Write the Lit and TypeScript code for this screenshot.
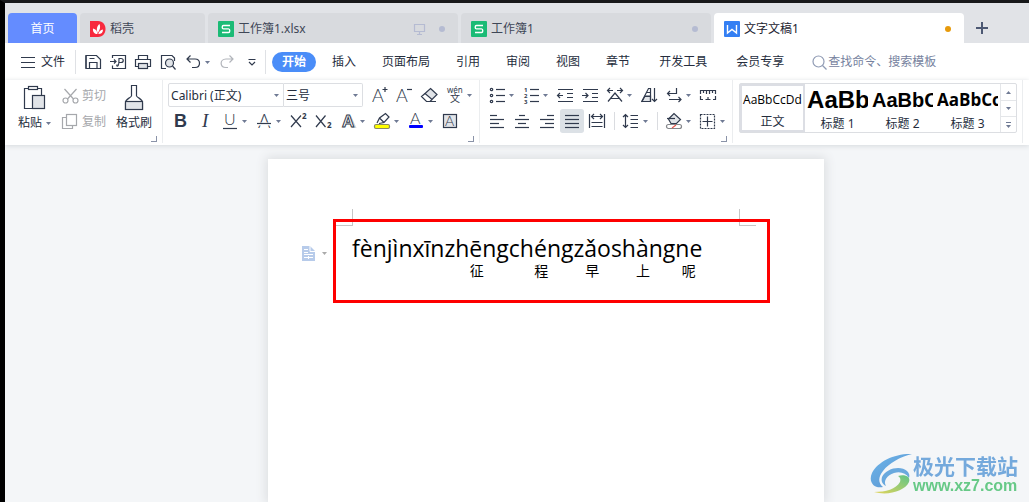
import { LitElement, html, svg, css } from "lit";
import { customElement } from "lit/decorators.js";
import { classMap } from "lit/directives/class-map.js";

const icon = (body: unknown, w = 20, h = 20) => html`<svg
  class="ic" width=${w} height=${h} viewBox="0 0 ${w} ${h}" aria-hidden="true">${body}</svg>`;

const p = (d: string) => svg`<path d=${d} />`;

const caretShape = html`<svg class="caret-shape" width="5" height="3" viewBox="0 0 5 3" aria-hidden="true"><path d="M0 0H5L2.5 3Z" /></svg>`;

interface Tool {
  name: string;
  body?: unknown;
  caret?: boolean;
  active?: boolean;
  rule?: boolean;
}

const hline = (y: number, a: number, b: number) => `M${a} ${y}H${b}`;

const quickTools: Tool[] = [
  { name: "保存", body: svg`${p("M3 3.5H13.5L17.5 7.5V16.5H3Z")}${p("M3 3.5V16.5M6.5 16.5V10.5H14V16.5M6.5 6.5H11.5")}` },
  { name: "输出为PDF", body: svg`${p("M4.5 6V3.5H17.5V16.5H4.5V13.5")}${p("M2 9.5H8M6 7.5L8 9.5L6 11.5")}${p("M9.5 12.5C8.5 13 8.5 14.5 9.8 14C11 13.5 11 9 11 6.5H13C16 6.5 16 10.5 13 10.5H11")}` },
  { name: "打印", body: svg`${p("M5.5 7.5V3.5H14.5V7.5M5.5 14.5H2.5V7.5H17.5V14.5H14.5")}<rect class="soft" x="5.5" y="11.5" width="9" height="5" />` },
  { name: "打印预览", body: svg`${p("M8 16.5H3.5V3.5H14L16.5 6V9")}<circle class="soft" cx="11.5" cy="11" r="4" />${p("M14.5 14L17.5 17.5")}` },
  { name: "撤销", caret: true, body: p("M7.5 3.5L4 7L7.5 10.5M4 7H12C18 7 18 15.5 12 15.5H9") },
  { name: "恢复", body: svg`<g class="dim">${p("M12.500 3.500L16 7L12.500 10.500M16 7H9C2.500 7 2.500 15.500 9 15.500H11")}</g>` },
  { name: "更多", body: svg`${p("M6.500 7.500H13.500M7 10L10 13L13 10")}` },
];

const glyph = (t: string, x: number, y: number, size: number, cls = "thin") =>
  svg`<text class=${cls} x=${x} y=${y} font-size=${size}>${t}</text>`;

const fontTop: Tool[] = [
  { name: "增大字号", body: svg`${glyph("A", 2, 17, 18)}${p("M12.500 4.500H17.500M15 2V7")}` },
  { name: "减小字号", body: svg`${glyph("A", 1, 17, 18)}${p("M12 4.500H17")}` },
  { name: "清除格式", body: svg`<path class="soft" d="M10.500 3.500L17 9.500L12 14.500L5 8.500Z" />${p("M5 8.500L1.500 11.500L6.500 16.500H10L12 14.500M8 16.500H16")}` },
  { name: "拼音指南", caret: true, body: svg`${glyph("wén", 2, 8, 8, "tiny")}${glyph("文", 5, 17, 10, "tiny")}` },
];

const fontBottom: Tool[] = [
  { name: "加粗", body: glyph("B", 4, 16, 18, "heavy") },
  { name: "倾斜", body: glyph("I", 7, 16, 19, "slant") },
  { name: "下划线", caret: true, body: svg`${glyph("U", 4, 14, 16)}${p(hline(17.5, 3, 17))}` },
  { name: "删除线", caret: true, body: svg`${glyph("A", 4, 17, 19)}<path class="knock" d="M3 13H17" />${p(hline(12.5, 3, 17))}` },
  { name: "上标", body: svg`${p("M3 4.500L13 16M13 4.500L3 16")}${glyph("2", 14, 8, 8, "tiny strong")}` },
  { name: "下标", body: svg`${p("M3 4.500L12.500 16M12.500 4.500L3 16")}${glyph("2", 14, 17, 8, "tiny strong")}` },
  { name: "文字效果", caret: true, body: svg`<path class="ghost" d="M12 5L17 16H14" /><text class="outline" x="4" y="16" font-size="17">A</text>` },
  { name: "突出显示", caret: true, body: svg`${p("M5 12L7.500 7L13.500 2.500L17 6L12 11.500L7 12.500M7.500 7L12 11.500")}<rect class="marker" x="2.500" y="13.500" width="15" height="4" rx="1.500" />` },
  { name: "字体颜色", caret: true, body: svg`${glyph("A", 4, 13, 16)}<rect class="blue" x="3" y="14" width="14" height="3" rx="1" />` },
  { name: "字符底纹", body: svg`<rect class="soft" x="3.500" y="3.500" width="13" height="13" />${glyph("A", 5, 15, 14)}` },
];

const arrowL = (x: number, y: number) => `M${x + 2.5} ${y - 2.5}L${x} ${y}L${x + 2.5} ${y + 2.5}`;
const arrowR = (x: number, y: number) => `M${x - 2.5} ${y - 2.5}L${x} ${y}L${x - 2.5} ${y + 2.5}`;

const paraTop: Tool[] = [
  { name: "项目符号", caret: true, body: svg`${[4.5, 10.5, 16.5].map((y) => svg`<circle cx="4.500" cy=${y} r="1.200" />${p(hline(y, 9, 18))}`)}` },
  { name: "编号", caret: true, body: svg`${[4.5, 10.5, 16.5].map((y, i) => svg`${glyph(String(i + 1), 3, y + 2, 6, "tiny strong")}${p(hline(y, 9, 18))}`)}` },
  { name: "减少缩进量", body: svg`${p("M3 4.500H18M12 8.500H18M12 12.500H18M3 16.500H18M3 10.500H8")}${p(arrowL(2.5, 10.5))}` },
  { name: "增加缩进量", body: svg`${p("M3 4.500H18M12 8.500H18M12 12.500H18M3 16.500H18M2 10.500H8")}${p(arrowR(8, 10.5))}` },
  { name: "中文版式", caret: true, body: svg`${p("M2.500 5.500H8M12 5.500H17.500M3 16.500L10 8L17 16.500M6 13.500H14")}${p(arrowL(2.5, 5.5))}${p(arrowR(17.5, 5.5))}` },
  { name: "排序", body: svg`<path class="soft" d="M6 11H11.500V16.500H3Z" />${p("M2.500 17L9.500 3.500H11.500V17M7.500 7.500H11.500M5.500 11.500H11.500M3 16.500H11.500M15.500 3V16.500M13 14L15.500 16.500L18 14")}` },
  { name: "换行", caret: true, body: svg`${p("M12.500 3V8.500H4M5 14.500H16.500")}${p(arrowL(3.5, 8.5))}${p(arrowR(17, 14.5))}` },
  { name: "标尺", body: svg`${p("M2.500 9V5.500H17.500V9M5.500 5.500V8M8.500 5.500V9M11.500 5.500V9M14.500 5.500V8M2.500 11V14.500H5M17.500 11V14.500H15M7.500 14.500H12.500M10 12V14.500")}` },
];

const bars = (spans: [number, number][]) => svg`${spans.map(([a, b], i) => p(hline(4.5 + i * 4, a, b)))}`;

const paraBottom: Tool[] = [
  { name: "左对齐", body: bars([[3, 10], [3, 17], [3, 12], [3, 17]]) },
  { name: "居中对齐", body: bars([[7, 13], [3, 17], [6, 14], [3, 17]]) },
  { name: "右对齐", body: bars([[10, 17], [3, 17], [8, 17], [3, 17]]) },
  { name: "两端对齐", active: true, body: bars([[3, 17], [3, 17], [3, 17], [3, 17]]) },
  { name: "分散对齐", body: svg`${p("M2.500 3V17M17.500 3V17M4 5.500H16M4.500 11.500H15.500M4.500 15.500H15.500")}${p(arrowL(4.5, 5.5))}${p(arrowR(15.5, 5.5))}` },
  { name: "", rule: true },
  { name: "行距", caret: true, body: svg`${p("M4.500 3.500V16.500M2 6L4.500 3.500L7 6M2 14L4.500 16.500L7 14M9.500 4.500H17M9.500 8.500H17M9.500 12.500H17M9.500 16.500H17")}` },
  { name: "", rule: true },
  { name: "底纹颜色", caret: true, body: svg`<path class="soft" d="M4.500 8L10 2.500L16.500 8.500L12.500 12.500H7Z" />${p("M3 7.500H11")}<rect class="nofill" x="2.500" y="13.500" width="15" height="4" rx="2" /><path class="red" d="M8 17L12 14" />` },
  { name: "边框", caret: true, body: svg`<rect class="dash" x="2.500" y="3.500" width="14" height="14" />${p("M9.500 5.500V15.500M4.500 10.500H14.500")}` },
];

const sheetLogo = icon(svg`<rect class="sheet" width="16" height="16" rx="1" /><path class="logo-line" d="M12 4.500H5.500C3.800 4.500 3.800 7.900 5.500 7.900H10.500C12.200 7.900 12.200 11.500 10.500 11.500H4" />`, 16, 16);
const writerLogo = icon(svg`<rect class="writer" width="16" height="16" rx="1" /><path class="logo-line" d="M3.500 4V12L8 8.500L12.500 12V4" />`, 16, 16);
const docerLogo = icon(svg`<path class="docer" d="M0 0H8C18 0 18 16 8 16H0Z" /><path class="leaf" d="M7.500 13C4.500 13 2.500 11 3 7.500C6 8 7.200 10 7.500 13ZM7.800 12C6 8.500 7 5 9.500 3C10.800 6 10 9 7.800 12ZM8.300 13C9 10.500 10.500 9 13 8.500C13 11.500 11.500 13 8.300 13Z" />`, 16, 16);

const tabs = [
  { label: "稻壳", logo: docerLogo, cls: "docer-tab" },
  { label: "工作簿1.xlsx", logo: sheetLogo, cls: "file", screen: true, dot: true },
  { label: "工作簿1", logo: sheetLogo, cls: "file", dot: true },
  { label: "文字文稿1", logo: writerLogo, cls: "file current", dot: true },
];

const syllables: [string, string][] = [
  ["fèn", ""], ["jìn", ""], ["xīn", ""], ["zhēng", "征"], ["chéng", "程"], ["zǎo", "早"], ["shàng", "上"], ["ne", "呢"],
];

const styleCards = [
  { sample: "AaBbCcDd", label: "正文", cls: "body-style" },
  { sample: "AaBb", label: "标题 1", cls: "h1-style" },
  { sample: "AaBbC", label: "标题 2", cls: "h2-style" },
  { sample: "AaBbCc", label: "标题 3", cls: "h3-style" },
];

@customElement("app-root")
export class AppRoot extends LitElement {
  static styles = css`
    :host {
      display: block;
      font: 12px/16px "Noto Sans", "Noto Sans CJK SC", sans-serif;
      color: #252d3d;
    }
    * { box-sizing: border-box; }
    button, select, input { font: inherit; color: inherit; border: 0; background: none; padding: 0; margin: 0; }
    button { display: flex; align-items: center; justify-content: center; white-space: nowrap; cursor: pointer; }
    .app {
      display: flex; flex-direction: column; min-height: 100vh;
      border-top: 3px solid #17181a; border-left: 5px solid #000;
      background: #f4f6f8; overflow: hidden;
    }
    .ic { display: block; flex: none; fill: none; stroke: #303a4d; stroke-width: 1.2; overflow: visible; }
    .ic text { stroke: none; fill: #303a4d; }
    .soft { fill: #e1e4e8; }
    .dim { stroke: #b2b5bb; }
    .thin { font-family: Lato, sans-serif; font-weight: 300; }
    .tiny { font-family: "Noto Sans", "Noto Sans CJK SC", sans-serif; }
    .strong { font-weight: 700; }
    .heavy { font-family: "Liberation Sans", sans-serif; font-weight: 700; }
    .slant { font-family: "Liberation Serif", serif; font-style: italic; }
    .ic .outline { font-family: "Liberation Sans", sans-serif; font-weight: 700; fill: #fff; stroke: #303a4d; stroke-width: 1; }
    .ghost { stroke: #d5d7da; stroke-width: 2; }
    .knock { stroke: #fff; stroke-width: 3; }
    .marker { fill: #ff0; stroke: #8b8b64; }
    .blue { fill: #00f; stroke: none; }
    .nofill { fill: #fff; stroke: #85878b; }
    .red { stroke: #e8564c; }
    .dash { stroke-dasharray: 2 1; }
    .sheet { fill: #1bbb76; stroke: none; }
    .writer { fill: #347ff3; stroke: none; }
    .docer { fill: #f8293d; stroke: none; }
    .leaf { fill: #fff; stroke: none; }
    .logo-line { stroke: #fff; stroke-width: 1.400; }
    .caret-shape { display: block; fill: #6f7a94; }

    .tabs { display: flex; align-items: flex-end; gap: 3px; height: 40px; padding-left: 3px; background: #e1e3e7; }
    .tab {
      display: flex; align-items: center; justify-content: flex-start; gap: 4px;
      height: 30px; padding: 2px 13px 0 10px; border-radius: 4px 4px 0 0;
      background: #d8dade; color: #3f4757; min-width: 0;
    }
    .home { flex: none; width: 69px; padding: 2px 0 0; justify-content: center; background: #648cff; color: #fff; }
    .docer-tab { flex: 0 1 125px; }
    .file { flex: 0 1 250px; }
    .current { background: #fff; color: #1c2330; }
    .tab-name { flex: 1; text-align: left; }
    .dot { width: 6px; height: 6px; border-radius: 50%; background: #b5bbd2; }
    .current .dot { background: #e79a0b; }
    .screen { margin-right: 9px; }
    .screen .ic { stroke: #b5bbd2; }
    .add { width: 30px; height: 30px; }
    .add .ic { stroke: #4c5873; stroke-width: 2; }

    .menu { display: flex; align-items: center; height: 37px; padding: 1px 0 0 16px; background: #fff; }
    .file-menu { gap: 6px; }
    .vrule { flex: none; width: 1px; height: 24px; background: #dfe1e5; }
    .vrule.after-file { margin: 0 7px 0 10px; }
    .vrule.after-quick { margin: 0 6px 0 3px; }
    .tools { display: flex; align-items: center; gap: 5px; }
    .tool { display: flex; align-items: center; }
    .tool-btn { width: 20px; height: 20px; }
    .caret { width: 9px; height: 20px; }
    .on { background: #dce1e6; border-radius: 1px; box-shadow: 0 0 0 2px #dce1e6; }
    .split { width: 4px; display: flex; justify-content: center; }
    .split::before { content: ""; width: 1px; height: 18px; background: #dadce0; }
    .pages { display: flex; align-items: center; gap: 26px; }
    .pages.wide { gap: 29px; margin: 0 28px 0 29px; }
    .pill { height: 20px; padding: 0 10px; margin-right: -10px; border-radius: 10px; background: #4a8df8; color: #fff; font-weight: 700; }
    .search { display: flex; align-items: center; gap: 1px; color: #76829e; flex: 1; min-width: 0; }
    .search .ic { stroke: #909bb4; }
    .search input { flex: 1; min-width: 0; outline: 0; }
    .search input::placeholder { color: #76829e; opacity: 1; }

    .ribbon { display: flex; height: 65px; background: #fff; box-shadow: 0 1px 5px #d6d9dd; position: relative; }
    .group { display: flex; flex-direction: column; flex: none; padding: 2px 5px 0 0; margin-bottom: 2px; border-right: 1px solid #ebedef; }
    .row { display: flex; align-items: center; height: 26px; }
    .launcher { align-self: flex-end; width: 6px; height: 6px; margin-top: 2px; }
    .launcher::before { content: ""; width: 5px; height: 5px; border: solid #8a93a8; border-width: 0 1px 1px 0; }
    .clip { padding-left: 13px; }
    .clip-row { display: flex; height: 52px; padding-right: 5px; }
    .tall { flex-direction: column; justify-content: flex-start; gap: 4px; padding-top: 2px; }
    .with-caret { display: flex; align-items: center; gap: 4px; }
    .stack { display: flex; flex-direction: column; margin: 0 10px 0 11px; }
    .flat { gap: 3px; height: 26px; padding-top: 1px; color: #a6a8ac; }
    .flat .ic { stroke: #a6a8ac; }
    .font-group { padding-left: 5px; }
    .font-tools { padding-left: 2px; }
    .combos { display: flex; margin-right: 7px; }
    .combo { display: grid; align-items: center; height: 24px; border: 1px solid #dcdee2; border-radius: 2px 0 0 2px; }
    .combo > * { grid-area: 1 / 1; }
    .combo .caret-shape { justify-self: end; margin-right: 4px; pointer-events: none; }
    .combo select { appearance: none; width: 100%; height: 22px; padding: 1px 0 0 2px; outline: 0; }
    .family { width: 116px; }
    .size { width: 79px; border-left: 0; border-radius: 0 2px 2px 0; }
    .para { padding-left: 7px; }
    .styles { flex: none; padding: 3px 5px 0 6px; border-right: 1px solid #ebedef; margin-bottom: 2px; }
    .gallery { display: flex; height: 50px; border: 1px solid #dcdee2; border-radius: 2px; }
    .card { flex-direction: column; justify-content: flex-end; width: 65px; height: 48px; padding: 0 2px; overflow: hidden; align-items: center; }
    .sample { display: flex; align-items: center; height: 32px; width: 61px; overflow: hidden; color: #000; }
    .body-style { border: 2px solid #dcdee4; padding: 0; }
    .body-style .sample { height: 28px; font-family: "Open Sans", sans-serif; padding-left: 1px; }
    .h1-style .sample { font: 700 24px/32px "Liberation Sans", sans-serif; }
    .h2-style .sample { font: 700 20px/32px "Liberation Sans", sans-serif; }
    .h3-style .sample { font: 700 17px/32px "Open Sans", sans-serif; }
    .scroll { display: grid; grid-template-rows: 1fr 1fr 1fr; width: 16px; border-left: 1px solid #e4e6e9; }
    .scroll button { border-top: 1px solid #e4e6e9; }
    .scroll button:first-child { border-top: 0; }
    .up .caret-shape { transform: rotate(180deg); }
    .more { flex-direction: column; gap: 2px; }
    .more::before { content: ""; width: 5px; height: 1px; background: #6f7a94; }

    .desk { flex: 1; display: flex; justify-content: center; padding: 14px 0 0 58px; }
    .page { position: relative; flex: 0 1 556px; min-width: 0; padding: 50px 68px 0; background: #fff; box-shadow: 0 0 10px 2px #dcdee1; }
    .corners { display: flex; justify-content: space-between; height: 17px; }
    .corner { width: 17px; border-bottom: 1px solid #c6c6c6; }
    .corner.left { border-right: 1px solid #c6c6c6; }
    .corner.right { border-left: 1px solid #c6c6c6; }
    .line { display: flex; margin: 6px 0 0 16px; color: #000; }
    .syl { display: flex; flex-direction: column; align-items: center; font: 23px/32px "Open Sans", "Noto Sans", sans-serif; }
    .han { font: 14px/20px "Noto Sans CJK SC", sans-serif; height: 20px; margin-top: -4px; }
    .mark { position: absolute; left: 65px; right: 54px; top: 60px; height: 84px; border: 3px solid #fe0000; pointer-events: none; }
    .handle { position: absolute; left: 34px; top: 87px; gap: 7px; }
    .handle .ic { stroke: none; }
    .handle .caret-shape { fill: #aaa; }
    .sheet-mini { fill: #b7cbea; }
    .sheet-lines { stroke: #fff; stroke-width: 1; }

    .brand { position: fixed; right: 11px; bottom: 7px; display: flex; align-items: center; gap: 1px; }
    .brand .ic { stroke: none; }
    .brand-text { display: flex; flex-direction: column; }
    .brand-cn { font: 700 21px/24px "Noto Sans CJK SC", sans-serif; color: #74a9dc; }
    .brand-url { font: 700 16px/18px "Liberation Sans", sans-serif; color: #67c987; }
  `;

  private tool(t: Tool) {
    if (t.rule) return html`<span class="split"></span>`;
    return html`<span class="tool"
      ><button class=${classMap({ "tool-btn": true, on: !!t.active })} aria-label=${t.name}>${icon(t.body)}</button
      >${t.caret ? html`<button class="caret" aria-label="${t.name}选项">${caretShape}</button>` : ""}</span>`;
  }

  private tools(list: Tool[]) {
    return html`<div class="tools">${list.map((t) => this.tool(t))}</div>`;
  }

  private renderTabs() {
    return html`<nav class="tabs" aria-label="文档标签">
      <button class="tab home">首页</button>
      ${tabs.map((t) => html`<button class="tab ${t.cls}">
        ${t.logo}<span class="tab-name">${t.label}</span>
        ${t.screen ? html`<span class="screen">${icon(p("M0.500 1.500H10.500V8.500H0.500ZM5.500 8.500V11M3 11.500H8"), 12, 12)}</span>` : ""}
        ${t.dot ? html`<span class="dot"></span>` : ""}
      </button>`)}
      <button class="add" aria-label="新建">${icon(p("M6 0V12M0 6H12"), 12, 12)}</button>
    </nav>`;
  }

  private renderMenu() {
    return html`<div class="menu">
      <button class="file-menu">${icon(p("M0 1.500H14M0 6.500H14M0 11.500H14"), 14, 13)}文件</button>
      <span class="vrule after-file"></span>
      ${this.tools(quickTools)}
      <span class="vrule after-quick"></span>
      <nav class="pages">
        <button class="pill">开始</button>
        ${["插入", "页面布局", "引用", "审阅", "视图", "章节"].map((m) => html`<button>${m}</button>`)}
      </nav>
      <nav class="pages wide"><button>开发工具</button><button>会员专享</button></nav>
      <label class="search" aria-label="搜索">
        ${icon(svg`<circle cx="6.500" cy="6.500" r="5.500" />${p("M10.500 10.500L14.500 14.500")}`, 15, 15)}
        <input type="text" placeholder="查找命令、搜索模板" />
      </label>
    </div>`;
  }

  private renderRibbon() {
    return html`<div class="ribbon">
      <section class="group clip" aria-label="剪贴板">
        <div class="clip-row">
          <button class="tall">
            ${icon(svg`${p("M5.500 4.500H1.500V24.500H9M14 4.500H18.500V11")}<rect x="5.500" y="2.500" width="9" height="3" /><rect class="soft" x="9.500" y="11.500" width="12" height="13" />`, 24, 27)}
            <span class="with-caret">粘贴${caretShape}</span>
          </button>
          <div class="stack">
            <button class="flat">${icon(svg`<circle cx="3.500" cy="12.500" r="2.500" /><circle cx="13.500" cy="12.500" r="2.500" />${p("M2.500 1L11.500 11M14.500 1L5.500 11")}`, 17, 16)}剪切</button>
            <button class="flat">${icon(svg`${p("M4 4.500H0.500V15.500H10.500V13")}<rect x="4.500" y="1.500" width="10" height="11" />`, 17, 17)}复制</button>
          </div>
          <button class="tall">
            ${icon(svg`${p("M9.500 12V1.500H14.500V12M9.500 12C8 14.500 3.500 14.500 3.500 19V25.500H20.500V19C20.500 14.500 16 14.500 14.500 12")}<rect class="soft" x="3.500" y="17.500" width="17" height="8" />`, 24, 27)}
            <span>格式刷</span>
          </button>
        </div>
        <button class="launcher" aria-label="剪贴板设置"></button>
      </section>
      <section class="group font-group" aria-label="字体">
        <div class="row">
          <div class="combos">
            <label class="combo family"><select aria-label="字体"><option>Calibri (正文)</option></select>${caretShape}</label>
            <label class="combo size"><select aria-label="字号"><option>三号</option></select>${caretShape}</label>
          </div>
          ${this.tools(fontTop)}
        </div>
        <div class="row font-tools">${this.tools(fontBottom)}</div>
        <button class="launcher" aria-label="字体设置"></button>
      </section>
      <section class="group para" aria-label="段落">
        <div class="row">${this.tools(paraTop)}</div>
        <div class="row">${this.tools(paraBottom)}</div>
        <button class="launcher" aria-label="段落设置"></button>
      </section>
      <section class="styles" aria-label="样式">
        <div class="gallery">
          ${styleCards.map((s) => html`<button class="card ${s.cls}"><span class="sample">${s.sample}</span><span>${s.label}</span></button>`)}
          <div class="scroll">
            <button class="up" aria-label="向上">${caretShape}</button>
            <button aria-label="向下">${caretShape}</button>
            <button class="more" aria-label="更多样式">${caretShape}</button>
          </div>
        </div>
      </section>
    </div>`;
  }

  render() {
    return html`<div class="app">
      ${this.renderTabs()} ${this.renderMenu()} ${this.renderRibbon()}
      <main class="desk">
        <article class="page">
          <div class="corners"><span class="corner left"></span><span class="corner right"></span></div>
          <div class="line">
            ${syllables.map(([a, b]) => html`<span class="syl"><span>${a}</span><span class="han">${b}</span></span>`)}
          </div>
          <button class="handle" aria-label="段落布局">
            ${icon(svg`<path class="sheet-mini" d="M0 0H8L13 5V15H0Z" /><path class="sheet-lines" d="M8 0V5.500H13M2 3.500H6M2 6.500H6M2 8.500H11M2 11.500H6.500M6.500 10V13M6.500 11.500H11" />`, 13, 15)}${caretShape}
          </button>
          <div class="mark"></div>
        </article>
      </main>
      <div class="brand">
        ${icon(svg`
          <defs>
            <linearGradient id="swoosh" x1="0" y1="0" x2="1" y2="1"><stop offset="0" stop-color="#6db6ea" /><stop offset="1" stop-color="#5b92cf" /></linearGradient>
            <linearGradient id="tail" x1="0" y1="1" x2="1" y2="0"><stop offset="0" stop-color="#e3d55a" /><stop offset="1" stop-color="#5fc487" /></linearGradient>
          </defs>
          <path fill="url(#swoosh)" d="M42 1C26 0 8 8 2 20C-2 29 4 36 13 34C8 30 8 24 13 18C19 10 30 4 42 1Z" />
          <path fill="#6aa9de" d="M12 24C16 15 31 12 37 18C39 20 40 22 39 25C36 20 30 18 24 20C17 22 13 28 16 33C12 31 11 28 12 24Z" />
          <path fill="url(#tail)" d="M4 39C16 39 26 36 30 29C31 26 30 24 28 23C35 21 41 24 39 29C35 38 18 43 4 39Z" />`, 42, 42)}
        <div class="brand-text"><span class="brand-cn">极光下载站</span><span class="brand-url">www.xz7.com</span></div>
      </div>
    </div>`;
  }
}
